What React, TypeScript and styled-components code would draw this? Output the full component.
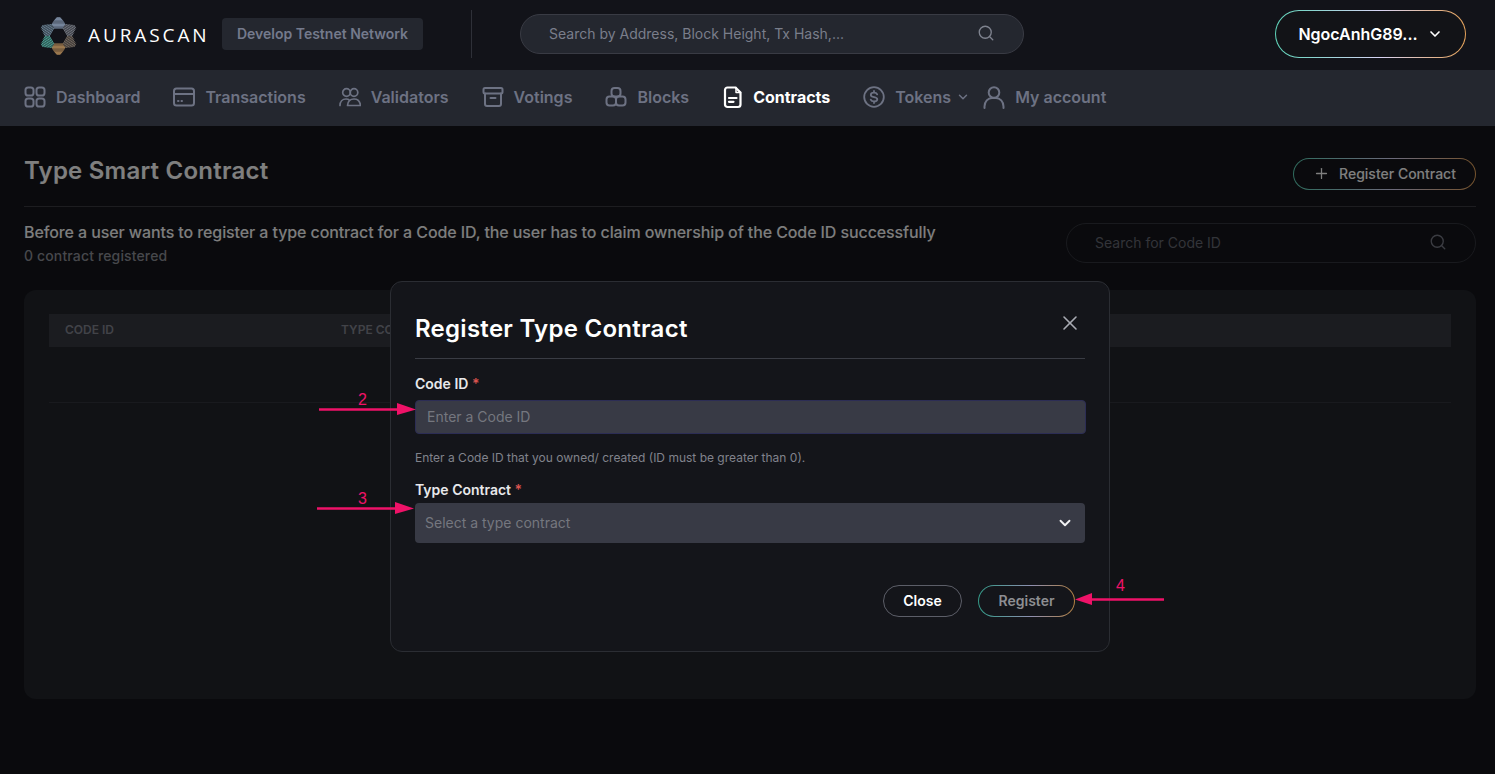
import React from "react";
import styled, { createGlobalStyle } from "styled-components";
import { Search, ChevronDown, Plus, X } from "lucide-react";

const Global = createGlobalStyle`
  * { box-sizing: border-box; }
  html, body { margin: 0; padding: 0; background: #14151a; }
  body { font-family: Inter, "Liberation Sans", sans-serif; overflow: hidden; }
`;

const Page = styled.div`
  width: 1495px;
  height: 774px;
  display: flex;
  flex-direction: column;
`;

const Header = styled.header`
  height: 70px;
  flex: none;
  background: #121319;
  display: flex;
  align-items: center;
  padding: 0 29px 2px 40px;
`;

const Brand = styled.div`
  display: flex;
  align-items: center;
  gap: 11px;
  width: 168px;
  flex: none;
  svg { margin-top: 4px; flex: none; }
`;

const Wordmark = styled.span`
  font-family: "Open Sans", sans-serif;
  font-size: 19px;
  font-weight: 400;
  letter-spacing: 2.9px;
  color: #fff;
  line-height: 1;
  margin-top: 3px;
  white-space: nowrap;
`;

const Badge = styled.div`
  margin-left: 14px;
  width: 201px;
  height: 32px;
  background: #24272f;
  border-radius: 4px;
  color: #747a8c;
  font-size: 14px;
  font-weight: 600;
  display: flex;
  align-items: center;
  justify-content: center;
  padding-bottom: 1px;
`;

const VDivider = styled.div`
  width: 1px;
  height: 48px;
  margin: 0 48px;
  background: #2e3038;
`;

const HeaderSearch = styled.div`
  width: 504px;
  height: 40px;
  border-radius: 20px;
  background: #24272f;
  border: 1px solid #393b44;
  display: flex;
  align-items: center;
  justify-content: space-between;
  padding: 0 28px 2px 28px;
  color: #7a7e8b;
  font-size: 14px;
  svg { color: #7f838f; }
`;

const Account = styled.button`
  margin-left: auto;
  width: 191px;
  height: 48px;
  border-radius: 24px;
  border: 1.5px solid transparent;
  background:
    linear-gradient(#121317, #121317) padding-box,
    linear-gradient(90deg, #5fd6bb, #d8d4f5 55%, #e8a45a) border-box;
  color: #fff;
  font: 600 16px Inter, sans-serif;
  display: flex;
  align-items: center;
  justify-content: center;
  gap: 9px;
`;

const Nav = styled.nav`
  height: 56px;
  flex: none;
  background: #24272f;
  display: flex;
  align-items: center;
  padding: 0 0 2px 24px;
`;

const NavItem = styled.div<{ $active?: boolean; $gap?: number }>`
  display: flex;
  align-items: center;
  gap: ${(p) => (p.$active ? 9 : 10)}px;
  margin-right: ${(p) => p.$gap ?? 33}px;
  color: ${(p) => (p.$active ? "#fff" : "#6d7283")};
  font-size: 16px;
  font-weight: ${(p) => (p.$active ? 700 : 600)};
  svg { flex: none; }
`;

const TokenChevron = styled(ChevronDown)`
  margin-left: -5px;
`;

const Main = styled.main`
  position: relative;
  flex: 1;
  background: #14151a;
  padding: 0 19px 0 24px;
`;

const TitleRow = styled.div`
  height: 81px;
  display: flex;
  align-items: center;
  justify-content: space-between;
  padding-top: 9px;
  border-bottom: 1px solid #3a3b40;
`;

const Title = styled.h1`
  margin: 0;
  font-size: 24px;
  font-weight: 600;
  letter-spacing: 0.22px;
  color: #fff;
`;

const GhostButton = styled.button`
  width: 183px;
  height: 32px;
  margin-top: 7px;
  padding: 0 0 2px;
  border-radius: 16px;
  border: 1px solid transparent;
  background:
    linear-gradient(#14151a, #14151a) padding-box,
    linear-gradient(90deg, #5fd6bb, #d8d4f5 55%, #e8a45a) border-box;
  color: #fff;
  font: 500 14px Inter, sans-serif;
  display: flex;
  align-items: center;
  justify-content: center;
  gap: 9px;
`;

const InfoRow = styled.div`
  height: 83px;
  display: flex;
  justify-content: space-between;
  padding-top: 16px;
`;

const InfoText = styled.p`
  margin: 0;
  font-size: 16px;
  font-weight: 500;
  letter-spacing: -0.1px;
  line-height: 19px;
  color: #fafafa;
`;

const InfoCount = styled.p`
  margin: 4px 0 0;
  font-size: 14px;
  font-weight: 500;
  letter-spacing: 0.14px;
  line-height: 20px;
  color: #8f9099;
`;

const CodeSearch = styled.div`
  width: 410px;
  height: 40px;
  border-radius: 20px;
  border: 1px solid #33343c;
  display: flex;
  align-items: center;
  justify-content: space-between;
  padding: 0 28px 2px;
  font-size: 14px;
  color: #666873;
  svg { color: #777985; }
`;

const Card = styled.section`
  width: 1452px;
  height: 409px;
  background: #22242b;
  border-radius: 12px;
  padding: 24px 25px;
`;

const TableHead = styled.div`
  height: 33px;
  background: #373941;
  display: flex;
  align-items: center;
  padding: 0 0 2px 16px;
  font-size: 12px;
  font-weight: 600;
  color: #848691;
`;

const HeadCell = styled.div<{ $width: number }>`
  width: ${(p) => p.$width}px;
`;

const EmptyRow = styled.div`
  height: 56px;
  border-bottom: 1px solid #33353c;
`;

const Overlay = styled.div`
  position: absolute;
  inset: 0;
  background: rgba(0, 0, 0, 0.5);
  display: flex;
  justify-content: center;
  align-items: flex-start;
  padding: 155px 0 0 5px;
`;

const Modal = styled.div`
  position: relative;
  width: 720px;
  height: 371px;
  background: #14151a;
  border: 1px solid #2b2d33;
  border-radius: 12px;
  padding: 24px 24px 0;
`;

const ModalHead = styled.div`
  height: 53px;
  border-bottom: 1px solid #3a3c44;
  display: flex;
  justify-content: space-between;
  align-items: flex-start;
`;

const ModalTitle = styled.h2`
  margin: 0;
  font-size: 24px;
  line-height: 45px;
  font-weight: 600;
  letter-spacing: 0.27px;
  color: #fff;
`;

const CloseIcon = styled(X)`
  color: #a9abb3;
  margin: 5px 3px 0 0;
`;

const Label = styled.label<{ $top: number }>`
  display: block;
  margin-top: ${(p) => p.$top}px;
  font-size: 14px;
  line-height: 17px;
  font-weight: 600;
  color: #e8e8ea;
  em {
    font-style: normal;
    color: #d9534f;
  }
`;

const CodeInput = styled.div`
  margin-top: 8px;
  width: 671px;
  height: 34px;
  background: #383a45;
  border: 1px solid #2c2d55;
  border-radius: 4px;
  display: flex;
  align-items: center;
  padding: 0 0 2px 11px;
  font-size: 14px;
  color: #75777f;
`;

const Help = styled.p`
  margin: 16px 0 0;
  font-size: 12px;
  line-height: 16px;
  color: #81838c;
`;

const SelectBox = styled.div`
  margin-top: 5px;
  height: 40px;
  width: 670px;
  background: #383a45;
  border-radius: 4px;
  display: flex;
  align-items: center;
  justify-content: space-between;
  padding: 0 11px 2px 10px;
  font-size: 14px;
  color: #75777f;
  svg { color: #f2f2f4; margin-top: 2px; }
`;

const Actions = styled.div`
  margin-top: 42px;
  width: 660px;
  display: flex;
  justify-content: flex-end;
  gap: 16px;
`;

const CloseButton = styled.button`
  width: 79px;
  height: 32px;
  padding: 0 0 1px;
  border-radius: 16px;
  border: 1px solid #5c5e68;
  background: #14151a;
  color: #fff;
  font: 600 14px Inter, sans-serif;
`;

const RegisterButton = styled.button`
  width: 97px;
  height: 32px;
  padding: 0 0 1px;
  border-radius: 16px;
  border: 1px solid transparent;
  background:
    linear-gradient(#14151a, #14151a) padding-box,
    linear-gradient(90deg, #339a88, #8f8fb0 55%, #b07f42) border-box;
  color: #8d8e92;
  font: 600 14px Inter, sans-serif;
`;

const Mark = styled.svg<{ $x: number; $y: number }>`
  position: absolute;
  left: ${(p) => p.$x}px;
  top: ${(p) => p.$y}px;
  overflow: visible;
`;

const MarkNumber = styled.span<{ $x: number; $y: number }>`
  position: absolute;
  left: ${(p) => p.$x}px;
  top: ${(p) => p.$y}px;
  font-family: "Liberation Sans", sans-serif;
  font-size: 16px;
  line-height: 16px;
  color: #ef1268;
`;

const PRONG_COLORS = ["#9db2cf", "#8b909b", "#8d7f70", "#cf9f63", "#5cc4b3", "#7f9cb0"];

function Logo() {
  const cx = 18.5;
  const cy = 19;
  const lines: React.ReactNode[] = [];
  PRONG_COLORS.forEach((color, k) => {
    const a = (-90 + k * 60) * (Math.PI / 180);
    const ux = Math.cos(a);
    const uy = Math.sin(a);
    const vx = -uy;
    const vy = ux;
    for (let d = 8; d <= 19.2; d += 1.2) {
      const w = d < 12 ? 4.6 + (d - 8) * 0.6 : Math.max(1.6, 7 - (d - 12) * 0.75);
      lines.push(
        <line
          key={`${k}-${d}`}
          x1={cx + ux * d - vx * w}
          y1={cy + uy * d - vy * w}
          x2={cx + ux * d + vx * w}
          y2={cy + uy * d + vy * w}
          stroke={color}
          strokeWidth={0.8}
        />
      );
    }
  });
  return (
    <svg width="37" height="38" viewBox="0 0 37 38" aria-hidden="true">
      {lines}
    </svg>
  );
}

type IconProps = { color?: string; weight?: number };

const Ico: React.FC<React.PropsWithChildren<IconProps>> = ({ children, color = "#6d7283", weight = 2 }) => (
  <svg width="22" height="24" viewBox="0 0 22 24" fill="none" stroke={color} strokeWidth={weight} strokeLinecap="round" strokeLinejoin="round" aria-hidden="true">
    {children}
  </svg>
);

const DashboardIcon = () => (
  <Ico>
    <rect x="1.5" y="2.5" width="8" height="8" rx="2.6" />
    <rect x="12.5" y="2.5" width="8" height="8" rx="2.6" />
    <rect x="1.5" y="13.5" width="8" height="8" rx="2.6" />
    <rect x="12.5" y="13.5" width="8" height="8" rx="2.6" />
  </Ico>
);
const TxIcon = () => (
  <Ico>
    <rect x="1" y="3.5" width="20" height="17" rx="2.5" />
    <path d="M1 9h20" />
    <path d="M5 16h.5M8.5 16h.5" />
  </Ico>
);
const ValidatorIcon = () => (
  <Ico weight={1.7}>
    <circle cx="7.5" cy="7.5" r="3.8" />
    <circle cx="15" cy="7.5" r="3.8" />
    <path d="M1 20.5c0-4 2.5-6.5 6-6.5 1.5 0 2.8.5 3.8 1.3M8.5 20.5c.3-4 2.800-6.500 6.500-6.500s6 2.500 6.500 6.500z" />
  </Ico>
);
const VoteIcon = () => (
  <Ico>
    <rect x="1.5" y="3" width="19" height="5.5" rx="1.5" />
    <path d="M3 8.500V19a2 2 0 0 0 2 2h12a2 2 0 0 0 2-2V8.500" />
    <path d="M8.500 13h5" />
  </Ico>
);
const BlockIcon = () => (
  <Ico>
    <rect x="6.5" y="3" width="9" height="8.5" rx="3" />
    <rect x="1.5" y="11.5" width="9.5" height="9" rx="3" />
    <rect x="11" y="11.5" width="9.5" height="9" rx="3" />
  </Ico>
);
const ContractIcon = () => (
  <Ico color="#fff" weight={2.2}>
    <path d="M5.500 2.500h8l5 5v12a2.500 2.500 0 0 1-2.500 2.500H5.500A2.500 2.500 0 0 1 3 19.500V5a2.500 2.500 0 0 1 2.500-2.500z" />
    <path d="M7 13h7.500M7 16.800h4.500" />
    <path d="M14 2.500V7.500h4.500" strokeWidth="1.5" />
  </Ico>
);
const TokenIcon = () => (
  <Ico>
    <circle cx="11" cy="12" r="9.8" strokeWidth="1.8" />
    <path d="M14.200 9.400c-.5-1.100-1.600-1.700-3.200-1.700-2 0-3.200 1-3.200 2.200 0 3 6.500 1.400 6.500 4.300 0 1.300-1.300 2.200-3.300 2.200-1.600 0-2.800-.6-3.300-1.700M11 6v1.500M11 16.500V18" strokeWidth="1.8" />
  </Ico>
);
const AccountIcon = () => (
  <Ico>
    <circle cx="11" cy="7.5" r="5.3" />
    <path d="M1.500 23v-1.500C1.500 16.500 5 13 9 13h4c4 0 7.500 3.500 7.500 8.500V23" />
  </Ico>
);

const Pink = "#ef1268";

function RightArrow() {
  return (
    <>
      <path d="M0 1.500H80" stroke={Pink} strokeWidth="2.5" />
      <path d="M78 -5L97 1.500 78 7z" fill={Pink} />
    </>
  );
}

export default function App() {
  return (
    <Page>
      <Global />
      <Header>
        <Brand>
          <Logo />
          <Wordmark>AURASCAN</Wordmark>
        </Brand>
        <Badge>Develop Testnet Network</Badge>
        <VDivider />
        <HeaderSearch>
          <span>Search by Address, Block Height, Tx Hash,...</span>
          <Search size={18} strokeWidth={1.8} />
        </HeaderSearch>
        <Account>
          NgocAnhG89...
          <ChevronDown size={16} strokeWidth={2.5} />
        </Account>
      </Header>
      <Nav>
        <NavItem><DashboardIcon />Dashboard</NavItem>
        <NavItem><TxIcon />Transactions</NavItem>
        <NavItem><ValidatorIcon />Validators</NavItem>
        <NavItem><VoteIcon />Votings</NavItem>
        <NavItem><BlockIcon />Blocks</NavItem>
        <NavItem $active><ContractIcon />Contracts</NavItem>
        <NavItem $gap={13}><TokenIcon />Tokens<TokenChevron size={14} strokeWidth={2.5} /></NavItem>
        <NavItem><AccountIcon />My account</NavItem>
      </Nav>
      <Main>
        <TitleRow>
          <Title>Type Smart Contract</Title>
          <GhostButton>
            <Plus size={17} strokeWidth={1.8} />
            Register Contract
          </GhostButton>
        </TitleRow>
        <InfoRow>
          <div>
            <InfoText>Before a user wants to register a type contract for a Code ID, the user has to claim ownership of the Code ID successfully</InfoText>
            <InfoCount>0 contract registered</InfoCount>
          </div>
          <CodeSearch>
            <span>Search for Code ID</span>
            <Search size={18} strokeWidth={1.8} />
          </CodeSearch>
        </InfoRow>
        <Card>
          <TableHead>
            <HeadCell $width={276}>CODE ID</HeadCell>
            <HeadCell $width={200}>TYPE CONTRACT</HeadCell>
          </TableHead>
          <EmptyRow />
        </Card>
        <Overlay>
          <Modal>
            <ModalHead>
              <ModalTitle>Register Type Contract</ModalTitle>
              <CloseIcon size={24} strokeWidth={1.6} />
            </ModalHead>
            <Label $top={16}>Code ID <em>*</em></Label>
            <CodeInput>Enter a Code ID</CodeInput>
            <Help>Enter a Code ID that you owned/ created (ID must be greater than 0).</Help>
            <Label $top={15}>Type Contract <em>*</em></Label>
            <SelectBox>
              <span>Select a type contract</span>
              <ChevronDown size={18} strokeWidth={2.5} />
            </SelectBox>
            <Actions>
              <CloseButton>Close</CloseButton>
              <RegisterButton>Register</RegisterButton>
            </Actions>
          </Modal>
          <Mark $x={319} $y={282} width="97" height="3"><RightArrow /></Mark>
          <MarkNumber $x={358} $y={266}>2</MarkNumber>
          <Mark $x={317} $y={381} width="97" height="3"><RightArrow /></Mark>
          <MarkNumber $x={358} $y={365}>3</MarkNumber>
          <Mark $x={1075} $y={472} width="90" height="3">
            <path d="M15 1.500H89" stroke={Pink} strokeWidth="2.5" />
            <path d="M0 1.500L17 -5V7z" fill={Pink} />
          </Mark>
          <MarkNumber $x={1116} $y={452}>4</MarkNumber>
        </Overlay>
      </Main>
    </Page>
  );
}
